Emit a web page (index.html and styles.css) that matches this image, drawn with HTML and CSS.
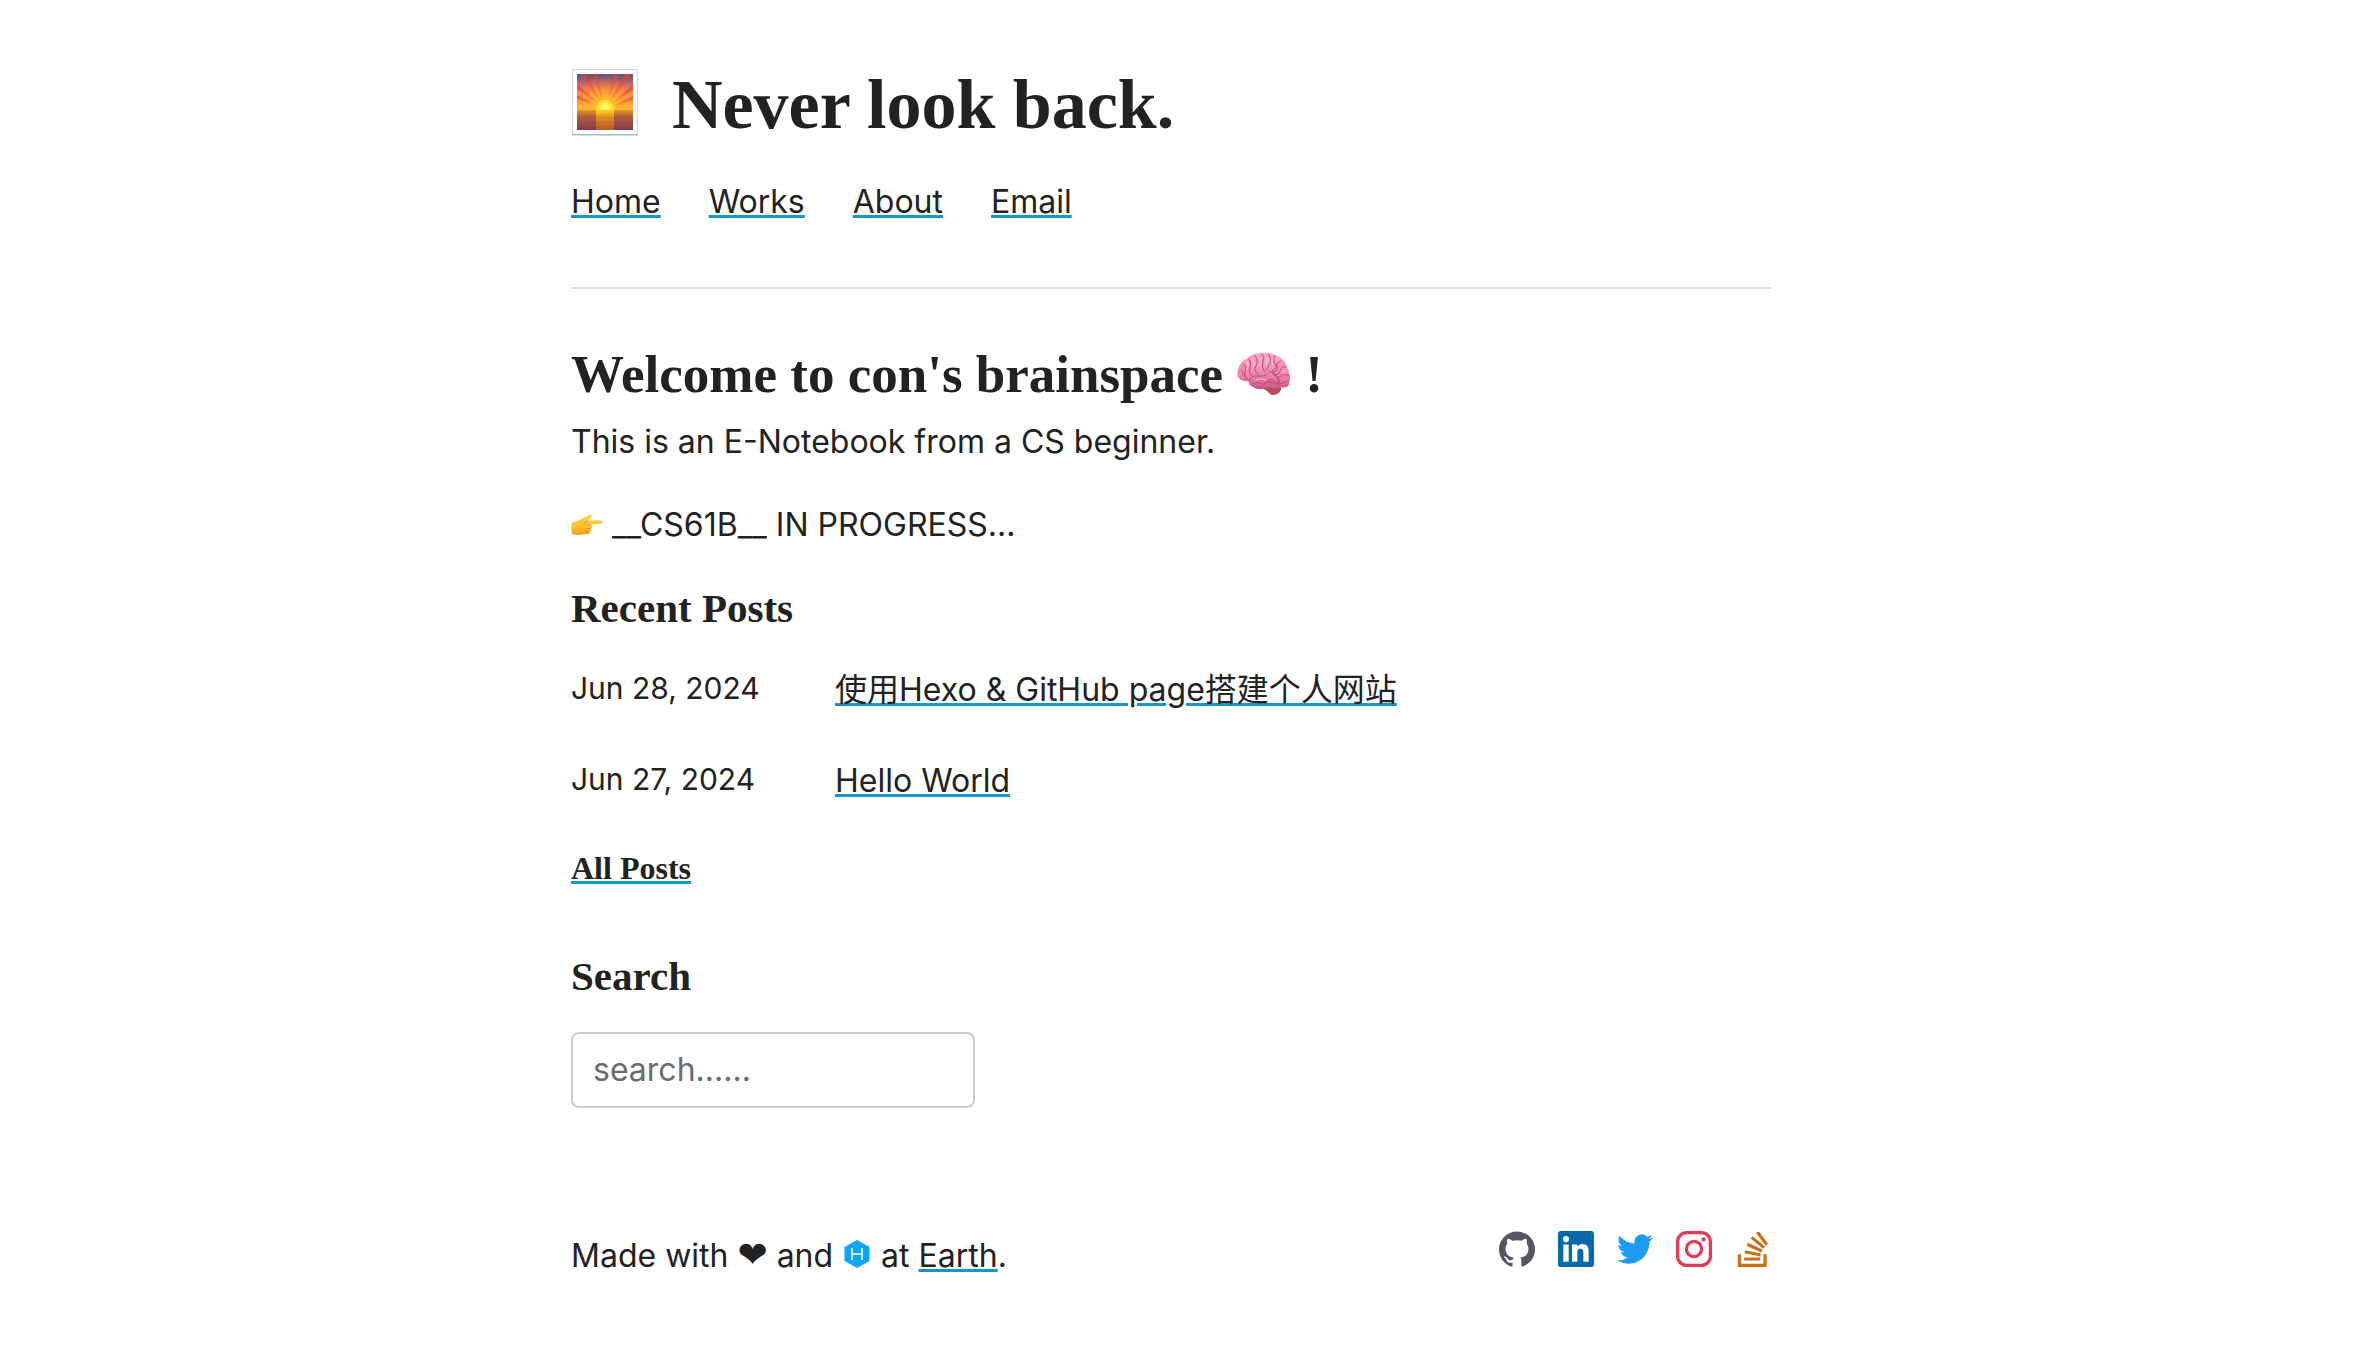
FILE: index.html
```html
<!DOCTYPE html>
<html lang="en">
<head>
<meta charset="utf-8">
<meta name="viewport" content="width=device-width, initial-scale=1">
<title>Never look back.</title>
<link rel="stylesheet" href="styles.css">
</head>
<body>
<div class="page">
  <header class="site-header">
    <div class="brand">
      <svg class="brand-logo" viewBox="0 0 68 72" aria-hidden="true">
        <defs>
          <linearGradient id="sky" x1="0" y1="0" x2="0" y2="1">
            <stop offset="0" stop-color="#5d527b"/><stop offset=".22" stop-color="#b0626c"/><stop offset=".45" stop-color="#f98448"/><stop offset="1" stop-color="#ffb22c"/>
          </linearGradient>
          <linearGradient id="sea" x1="0" y1="0" x2="0" y2="1">
            <stop offset="0" stop-color="#e69a22"/><stop offset=".3" stop-color="#b5603a"/><stop offset="1" stop-color="#7d3c48"/>
          </linearGradient>
          <linearGradient id="glint" x1="0" y1="0" x2="0" y2="1">
            <stop offset="0" stop-color="#ffd21f"/><stop offset=".4" stop-color="#e08a25"/><stop offset="1" stop-color="#b35a2b"/>
          </linearGradient>
          <radialGradient id="glow" cx="34" cy="40" r="32" gradientUnits="userSpaceOnUse">
            <stop offset="0" stop-color="#fff04a"/><stop offset=".4" stop-color="#ffc22b" stop-opacity=".9"/><stop offset="1" stop-color="#ff7a3d" stop-opacity="0"/>
          </radialGradient>
          <clipPath id="skyclip"><path d="M6 5h56v36H6z"/></clipPath>
        </defs>
        <path fill="#fff" stroke="#cfd8d9" d="M1.500.5h65v65h-65z"/>
        <path fill="#a9bcbc" d="M1 65h66v1.500H1z"/>
        <path fill="url(#sky)" d="M6 5h56v36H6z"/>
        <g clip-path="url(#skyclip)" fill="#e2453f" opacity=".7">
          <path d="M34 40 4 29v-4zM34 40 4 18v-5zM34 40 10 5h5zM34 40 22 5h4zM34 40 43 5h4zM34 40 54 5h6zM34 40 64 14v5zM34 40 64 26v4z"/>
        </g>
        <path fill="url(#glow)" opacity=".75" d="M6 5h56v36H6z"/>
        <path fill="#ffb13e" opacity=".8" d="M6 41v-4q4-3 7-1 4-1 5 2 5-1 7 3zM62 41v-4q-4-3-7-1-4-1-5 2-5-1-7 3z"/>
        <path fill="#ffe326" d="M26 41v-2a8 8 0 0 1 16 0v2z"/>
        <path fill="#fff56b" d="M29 41v-2a5 5 0 0 1 10 0v2z"/>
        <path fill="url(#sea)" d="M6 41h56v20H6z"/>
        <path fill="url(#glint)" d="M25 41h18v20H25z"/>
        <path fill="#70384a" opacity=".12" d="M6 48h56v1H6zM6 53h56v1H6zM6 57h56v1H6z"/>
      </svg>
      <h1 class="site-title">Never look back.</h1>
    </div>
    <nav class="site-nav" aria-label="Main">
      <a href="#home">Home</a>
      <a href="#works">Works</a>
      <a href="#about">About</a>
      <a href="#email">Email</a>
    </nav>
  </header>

  <main>
    <h2 class="welcome">Welcome to con's brainspace
      <svg class="brain" viewBox="0 0 54 44" aria-hidden="true">
        <defs>
          <linearGradient id="pink" x1="0" y1="0" x2="0" y2="1">
            <stop offset="0" stop-color="#fda9c6"/><stop offset=".6" stop-color="#ee86ac"/><stop offset="1" stop-color="#cf5686"/>
          </linearGradient>
        </defs>
        <path fill="#b74f5f" d="M26 34c4-2 16-3 18 1 1 4-3 8-8 8-4 0-5-5-10-6z"/>
        <path fill="url(#pink)" d="M1 25C-1 18 3 10 9 7c5-5 12-7 18-6 5-1 10 1 13 3 5 2 9 6 10 11 3 5 4 12 2 17-1 4-5 4-8 3-4 2-9 1-13 0-5 3-11 3-15 0-3-1-5-3-4-6-4 1-8 0-11-4z"/>
        <g fill="none" stroke="#bd4a79" stroke-width="1" stroke-linecap="round">
          <path d="M6 12q4 2 2 8t5 9M12 7q3 4 1 9t3 9M18 4q4 5 1 10t2 8M25 2q3 3 1 8t2 10M31 2q4 4 2 9t-4 7M38 4q-3 4 0 8t-3 7M44 9q-5 1-4 6t-4 5M49 15q-5-1-6 4t-7 3M52 24q-5-3-8 0t-7-1M12 29q2-6 9-5t10-3 9 4-3 6-10 1-9 3M16 32q4-3 9 0M30 29q5-3 8 1t12-1M4 18q3 1 2 5M41 26q2 3 0 7"/>
        </g>
        <g fill="none" stroke="#ffc4d9" stroke-width="1.200" stroke-linecap="round">
          <path d="M10 10q2 3 0 7M16 8q2 4 0 8M22 6q2 4 0 8M29 5q2 4 0 8M36 7q-2 3 0 6M19 28q5-2 10 0M45 19q2-1 3 1"/>
        </g>
      </svg>
      !</h2>
    <p class="intro">This is an E-Notebook from a CS beginner.</p>
    <p class="status">
      <svg class="hand" viewBox="0 0 32 22" aria-hidden="true">
        <defs>
          <linearGradient id="skin" x1="0" y1="0" x2="0" y2="1">
            <stop offset="0" stop-color="#ffd24a"/><stop offset=".6" stop-color="#ffc02d"/><stop offset="1" stop-color="#eb9d1d"/>
          </linearGradient>
        </defs>
        <path fill="url(#skin)" d="M1 8c4 0 6-1 9-3l8-4c2-1 4 1 2 3l-3 2.500h13.500c1.500 0 1.500 3 0 3L20 10.500c2 1 2 3 0 4 1 2 0 3-1 3 0 2-1 2.500-3 2.500l-9 1c-3 0-4-1-6-1-1-4-1-8 0-12z"/>
        <path fill="none" stroke="#dc8d18" stroke-width=".8" d="M19 11h-4M19 14.500h-4M18 17.500h-3M17 7l-4 2"/>
      </svg>
      __CS61B__ IN PROGRESS...</p>

    <section aria-labelledby="recent">
      <h3 class="section-title" id="recent">Recent Posts</h3>
      <ul class="posts">
        <li class="post"><time datetime="2024-06-28">Jun 28, 2024</time><a href="#hexo">使用Hexo &amp; GitHub page搭建个人网站</a></li>
        <li class="post"><time datetime="2024-06-27">Jun 27, 2024</time><a href="#hello">Hello World</a></li>
      </ul>
      <h4 class="all-posts"><a href="#archives">All Posts</a></h4>
    </section>

    <section class="search">
      <h3 class="section-title"><label for="search">Search</label></h3>
      <input class="search-input" id="search" type="text" placeholder="search......">
    </section>
  </main>

  <footer class="site-footer">
    <p class="credit">Made with <span class="heart">&#10084;&#65038;</span> and
      <a class="hexo" href="#hexo-io" aria-label="Hexo"><svg viewBox="0 0 26 28" aria-hidden="true"><path fill="#0ea5ff" d="M13 0l12.500 7v14L13 28 .5 21V7z"/><path fill="none" stroke="#fff" stroke-width="1.600" d="M8 8v12M18 8v12M8 14h10"/></svg></a>
      at <a href="#earth">Earth</a>.</p>
    <div class="social">
      <a href="#github" aria-label="GitHub"><svg viewBox="0 0 24 24" fill="#565563"><path d="M12 .297c-6.630 0-12 5.373-12 12 0 5.303 3.438 9.800 8.205 11.385.6.113.82-.258.82-.577 0-.285-.01-1.040-.015-2.040-3.338.724-4.042-1.610-4.042-1.610C4.422 18.070 3.633 17.700 3.633 17.700c-1.087-.744.084-.729.084-.729 1.205.084 1.838 1.236 1.838 1.236 1.070 1.835 2.809 1.305 3.495.998.108-.776.417-1.305.76-1.605-2.665-.3-5.466-1.332-5.466-5.930 0-1.310.465-2.380 1.235-3.220-.135-.303-.54-1.523.105-3.176 0 0 1.005-.322 3.300 1.230.96-.267 1.980-.399 3-.405 1.020.006 2.040.138 3 .405 2.280-1.552 3.285-1.230 3.285-1.230.645 1.653.24 2.873.12 3.176.765.840 1.230 1.910 1.230 3.220 0 4.610-2.805 5.625-5.475 5.920.42.360.81 1.096.81 2.220 0 1.606-.015 2.896-.015 3.286 0 .315.21.69.825.57C20.565 22.092 24 17.592 24 12.297c0-6.627-5.373-12-12-12"/></svg></a>
      <a href="#linkedin" aria-label="LinkedIn"><svg viewBox="0 0 24 24" fill="#0569aa"><path d="M20.447 20.452h-3.554v-5.569c0-1.328-.027-3.037-1.852-3.037-1.853 0-2.136 1.445-2.136 2.939v5.667H9.351V9h3.414v1.561h.046c.477-.9 1.637-1.850 3.370-1.850 3.601 0 4.267 2.370 4.267 5.455v6.286zM5.337 7.433a2.062 2.062 0 0 1-2.063-2.065 2.064 2.064 0 1 1 2.063 2.065zm1.782 13.019H3.555V9h3.564v11.452zM22.225 0H1.771C.792 0 0 .774 0 1.729v20.542C0 23.227.792 24 1.771 24h20.451C23.200 24 24 23.227 24 22.271V1.729C24 .774 23.200 0 22.222 0h.003z"/></svg></a>
      <a href="#twitter" aria-label="Twitter"><svg viewBox="0 0 24 24" fill="#1d9bf0"><path d="M23.953 4.570a10 10 0 0 1-2.825.775 4.958 4.958 0 0 0 2.163-2.723c-.951.555-2.005.959-3.127 1.184a4.920 4.920 0 0 0-8.384 4.482C7.690 8.095 4.067 6.130 1.640 3.162a4.822 4.822 0 0 0-.666 2.475c0 1.710.87 3.213 2.188 4.096a4.904 4.904 0 0 1-2.228-.616v.060a4.923 4.923 0 0 0 3.946 4.827 4.996 4.996 0 0 1-2.212.085 4.936 4.936 0 0 0 4.604 3.417 9.867 9.867 0 0 1-6.102 2.105c-.39 0-.779-.023-1.170-.067a13.995 13.995 0 0 0 7.557 2.209c9.053 0 13.998-7.496 13.998-13.985 0-.21 0-.42-.015-.63A9.935 9.935 0 0 0 24 4.590z"/></svg></a>
      <a href="#instagram" aria-label="Instagram"><svg viewBox="0 0 24 24"><rect x="1.080" y="1.080" width="21.840" height="21.840" rx="6" fill="none" stroke="#e23b58" stroke-width="2.160"/><circle cx="12" cy="12" r="5.080" fill="none" stroke="#e23b58" stroke-width="2.160"/><circle cx="18.400" cy="5.600" r="1.440" fill="#e23b58"/></svg></a>
      <a href="#stackoverflow" aria-label="Stack Overflow"><svg viewBox="0 0 24 24" fill="#c86f14"><path d="M18.986 21.865v-6.404h2.134V24H1.844v-8.539h2.130v6.404h15.012zM6.111 19.731H16.850v-2.137H6.111v2.137zm.259-4.852l10.480 2.189.451-2.070-10.478-2.187-.453 2.068zm1.359-5.056l9.705 4.530.903-1.950-9.706-4.530-.902 1.936v.014zm2.715-4.785l8.217 6.855 1.359-1.620-8.216-6.853-1.350 1.617-.01.001zM15.751 0l-1.746 1.294 6.405 8.604 1.746-1.294L15.749 0h.002z"/></svg></a>
    </div>
  </footer>
</div>
</body>
</html>
```
FILE: styles.css
```css
:root {
  --text: #222;
  --accent: #1597cc;
  --serif: "Liberation Serif", serif;
  --sans: Inter, "Noto Sans CJK SC", sans-serif;
}

* {
  box-sizing: border-box;
}

body {
  margin: 0;
  padding: 63px 28px 80px 0;
  background: #fff;
  color: var(--text);
  font: 32px/54px var(--sans);
}

h1, h2, h3, h4, p, ul {
  margin: 0;
  padding: 0;
}

h1, h2, h3, h4 {
  font-family: var(--serif);
  font-weight: 700;
}

a {
  color: inherit;
  text-decoration: underline 3px var(--accent);
  text-underline-offset: 2px;
}

svg {
  display: block;
}

.page {
  max-width: 1200px;
  margin: 0 auto;
}

.site-header {
  padding-bottom: 61px;
  border-bottom: 2px solid #ddd;
}

.brand {
  display: flex;
  align-items: center;
  gap: 33px;
}

.brand-logo {
  width: 68px;
  height: 72px;
}

.site-title {
  font-size: 70px;
  line-height: 84px;
}

.site-nav {
  display: flex;
  gap: 48px;
  margin-top: 31px;
  line-height: 48px;
}

.welcome {
  display: flex;
  align-items: center;
  gap: 14px;
  margin-top: 53px;
  font-size: 53px;
  line-height: 64px;
}

.brain {
  width: 54px;
  height: 44px;
}

.intro {
  margin-top: 9px;
}

.status {
  display: flex;
  align-items: center;
  gap: 9px;
  margin-top: 29px;
}

.hand {
  width: 32px;
  height: 22px;
}

.section-title {
  margin-top: 31px;
  font-size: 41px;
  line-height: 50px;
}

.posts {
  display: grid;
  gap: 37px;
  margin-top: 30px;
  list-style: none;
}

.post {
  display: grid;
  grid-template-columns: 264px 1fr;
  height: 54px;
}

.post time {
  font-size: 30px;
  line-height: 50px;
}

.all-posts {
  margin-top: 40px;
  font-size: 32px;
  line-height: 40px;
}

.search {
  margin-top: 63px;
}

.search-input {
  display: block;
  width: 404px;
  height: 76px;
  margin-top: 31px;
  padding: 0 20px 2px;
  border: 2px solid #ccc;
  border-radius: 8px;
  background: #fff;
  color: var(--text);
  font: inherit;
}

.search-input::placeholder {
  color: #6b6b6b;
  opacity: 1;
}

.site-footer {
  display: flex;
  justify-content: space-between;
  align-items: flex-start;
  margin-top: 121px;
}

.heart {
  font-family: "DejaVu Sans", sans-serif;
  font-size: 36px;
  line-height: 1;
}

.hexo {
  display: inline-block;
  width: 26px;
  height: 28px;
  margin: 0 2px;
  line-height: 28px;
  vertical-align: -1px;
}

.social {
  display: flex;
  gap: 23px;
  padding-top: 2px;
}

.social svg {
  width: 36px;
  height: 36px;
}
```
